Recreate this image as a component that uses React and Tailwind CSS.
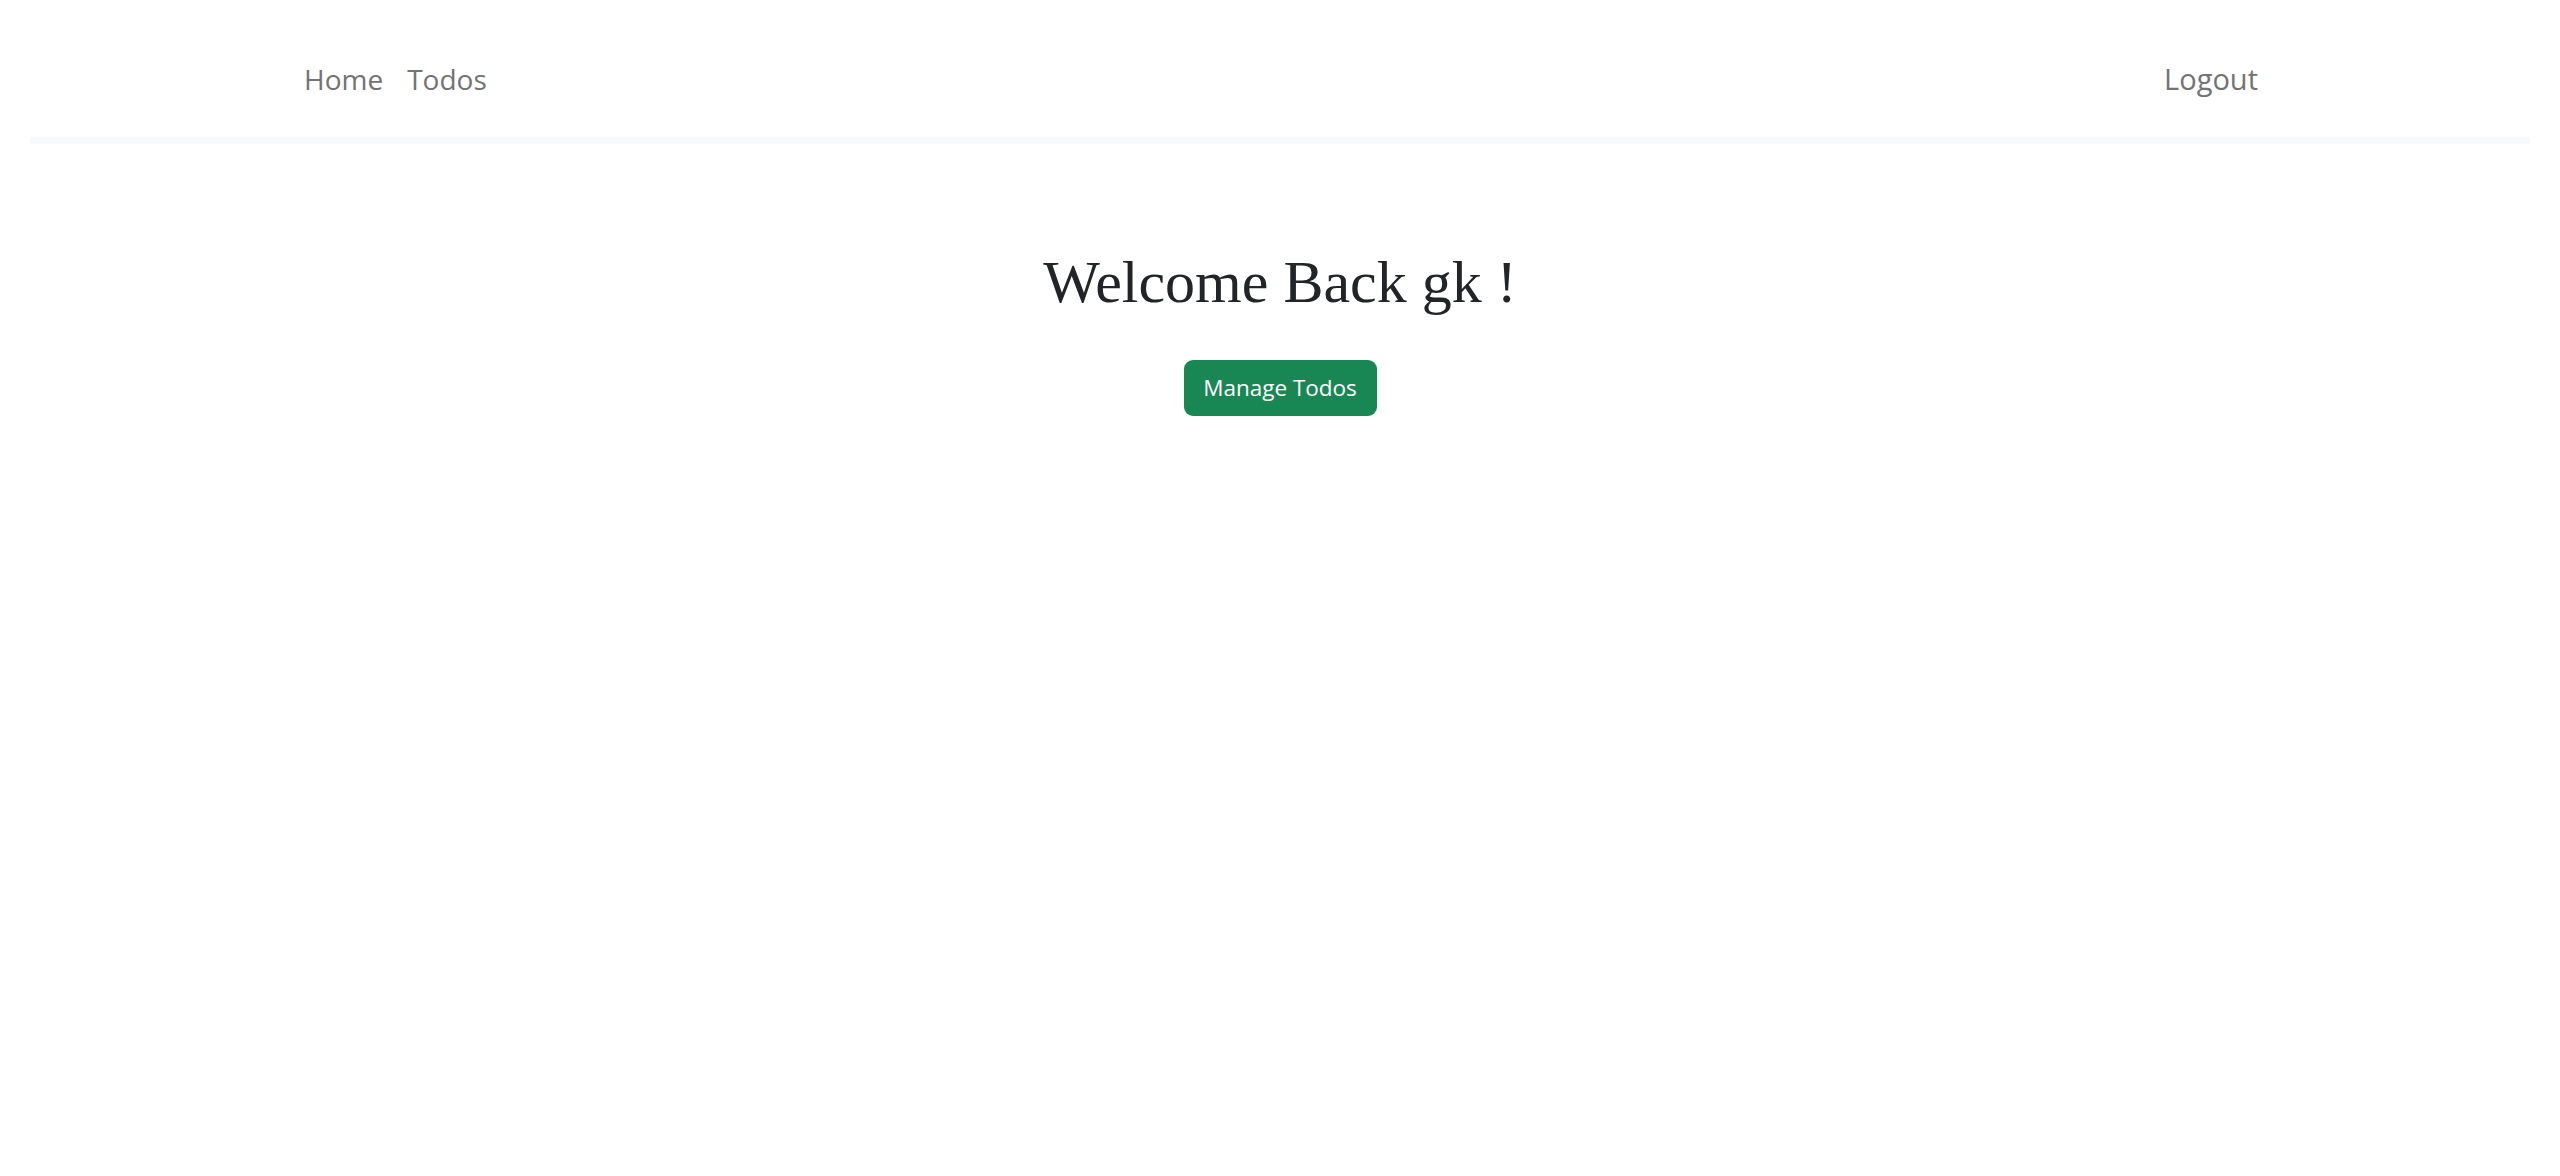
export default function App() {
  return (
    <div className="min-h-screen bg-white" style={{ fontFamily: '"Open Sans", "Noto Sans", sans-serif' }}>
      {/* Top nav */}
      <nav className="h-[137px] px-[30px]">
        <div className="mx-auto flex w-[1980px] justify-between px-[14px] pt-[61px] text-[28px] leading-[36px] text-[#737373]">
          <div className="flex gap-[24px]">
            <a href="#">Home</a>
            <a href="#">Todos</a>
          </div>
          <a href="#" className="-mr-[2px] text-[29px]">Logout</a>
        </div>
      </nav>
      <div className="mx-[30px] h-[7px] bg-[#f8f9fa]" />

      {/* Welcome */}
      <main className="flex flex-col items-center pt-[102px]">
        <h1 className="text-[60px] leading-[72px] text-[#212529]" style={{ fontFamily: '"Liberation Serif", serif' }}>
          Welcome Back gk !
        </h1>
        <button className="mt-[42px] h-[56px] w-[193px] rounded-[9px] bg-[#198754] text-[22.5px] text-white">
          Manage Todos
        </button>
      </main>
    </div>
  );
}
